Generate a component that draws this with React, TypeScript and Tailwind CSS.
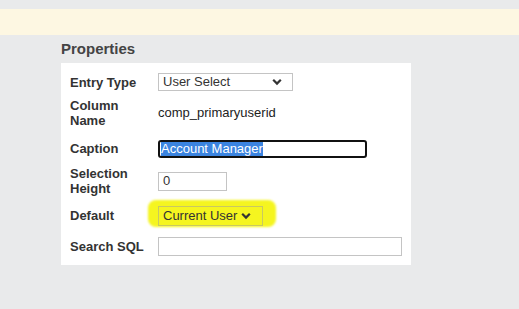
const font = { fontFamily: '"Liberation Sans", Arial, sans-serif' };

function Chevron() {
  return (
    <svg width="10" height="8" viewBox="0 0 10 8" className="shrink-0">
      <path d="M1.2 1.8 L5 5.6 L8.8 1.8" fill="none" stroke="#333" strokeWidth="2.2" />
    </svg>
  );
}

function Row({ label, height, children }: { label: React.ReactNode; height: string; children: React.ReactNode }) {
  return (
    <div className={`flex items-center ${height}`}>
      <div className="w-[88px] shrink-0 text-[13px] font-bold leading-[15px] text-[#333]">{label}</div>
      <div className="flex-1 flex items-center">{children}</div>
    </div>
  );
}

export default function App() {
  return (
    <div className="w-[519px] h-[309px] bg-[#e9eaeb] overflow-hidden" style={font}>
      <div className="h-[9px]" />
      <div className="h-[26px] bg-[#fdf7e2]" />
      <div className="pl-[61px] pt-[5px]">
        <h2 className="text-[15px] font-bold text-[#444] leading-[18px] h-[23px]">Properties</h2>
        <div className="w-[350px] bg-white pl-[9px] pt-[6px] pb-[8px]">
          <Row label="Entry Type" height="h-[26px]">
            <div className="w-[135px] h-[18px] border border-[#c4c4c4] flex items-center justify-between pl-[4px] pr-[10px] text-[13px] text-[#333]">
              <span>User Select</span>
              <Chevron />
            </div>
          </Row>
          <Row label={<>Column<br />Name</>} height="h-[36px]">
            <span className="text-[13px] text-[#222]">comp_primaryuserid</span>
          </Row>
          <Row label="Caption" height="h-[35px]">
            <div className="w-[209px] h-[18px] border-2 border-[#111] rounded-[3px] flex items-center pl-[1px] text-[13px]">
              <span className="bg-[#3b84e0] text-white leading-[14px]">Account Manager</span>
            </div>
          </Row>
          <Row label={<>Selection<br />Height</>} height="h-[30px]">
            <div className="w-[69px] h-[19px] border border-[#c4c4c4] flex items-center pl-[4px] text-[13px] text-[#333]">0</div>
          </Row>
          <Row label="Default" height="h-[39px]">
            <div className="relative">
              <div className="absolute left-[-10px] top-[-6px] w-[128px] h-[27px] bg-[#f5f520] rounded-[8px] blur-[1px]" />
              <div className="relative w-[105px] h-[20px] border border-[#c9c960] flex items-center justify-between pl-[4px] pr-[11px] text-[13px] text-[#333]">
                <span>Current User</span>
                <Chevron />
              </div>
            </div>
          </Row>
          <Row label="Search SQL" height="h-[22px]">
            <div className="w-[244px] h-[19px] border border-[#c4c4c4]" />
          </Row>
        </div>
      </div>
    </div>
  );
}
